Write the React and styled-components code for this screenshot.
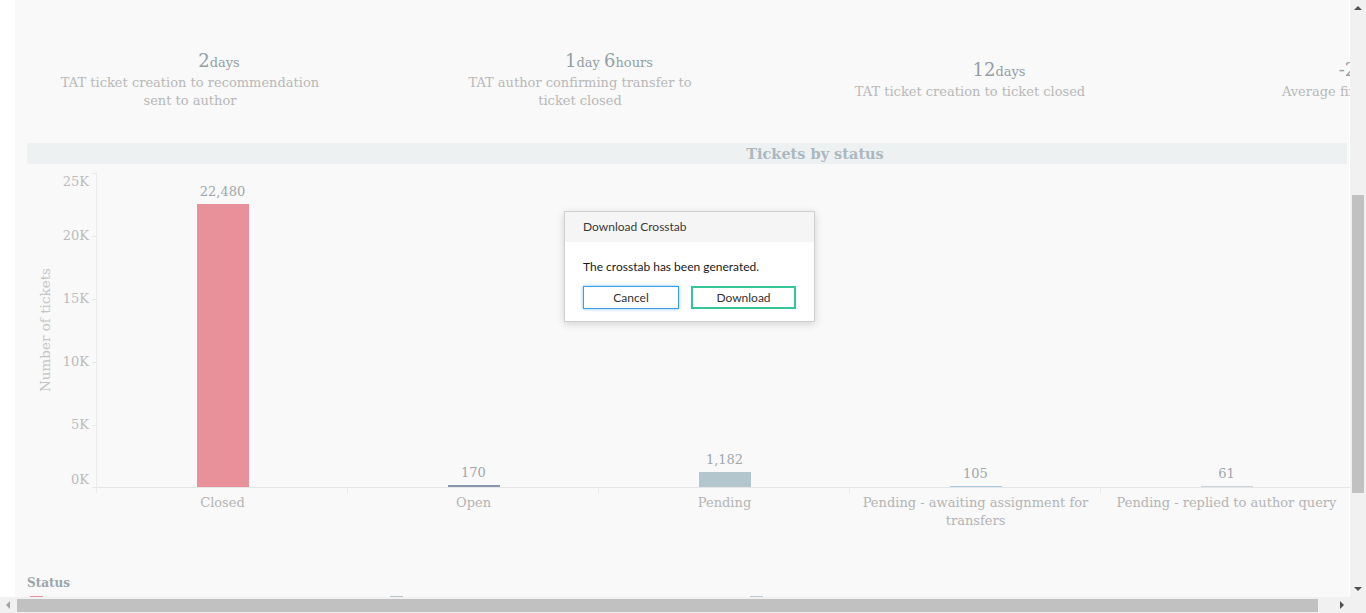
import React from 'react';
import styled, {createGlobalStyle} from 'styled-components';

const serif = `"DejaVu Serif", "Liberation Serif", serif`;
const sans = `Lato, "Open Sans", "Liberation Sans", sans-serif`;

const GlobalStyle = createGlobalStyle`
    html, body {
        margin: 0;
        padding: 0;
        overflow: hidden;
        background: #fff;
    }
`;

const kpis = [
    {value: [['2', 'days']], label: 'TAT ticket creation to recommendation sent to author'},
    {value: [['1', 'day '], ['6', 'hours']], label: 'TAT author confirming transfer to ticket closed'},
    {value: [['12', 'days']], label: 'TAT ticket creation to ticket closed'},
    {value: [['-2', 'days '], ['4', 'hours']], label: 'Average first reply time'},
];

const statuses = [
    {name: 'Closed', count: 22480, color: '#e8919b'},
    {name: 'Open', count: 170, color: '#8c96b0'},
    {name: 'Pending', count: 1182, color: '#b3c5cd'},
    {name: 'Pending - awaiting assignment for transfers', count: 105, color: '#a9c9dd'},
    {name: 'Pending - replied to author query', count: 61, color: '#c9d3d9'},
];

const legend = [
    {name: 'Closed', color: '#e8919b'},
    {name: 'Pending', color: '#b8c6ce'},
    {name: 'Pending - awaiting assignment for transfers', color: '#b9cbd6'},
];

const ticks = [0, 5000, 10000, 15000, 20000, 25000];
const MAX = 25000;
const PLOT_H = 316;
const SCALE_H = 315;

const Frame = styled.div`
    position: relative;
    width: 1366px;
    height: 613px;
    display: grid;
    grid-template-columns: 1fr 16px;
    grid-template-rows: 1fr 16px;
    font-family: ${serif};
`;

const Viewport = styled.div`
    overflow: hidden;
    background: #fff;
    padding-left: 15px;
`;

const Panel = styled.div`
    width: 1334px;
    height: 100%;
    background: #f9f9f9;
`;

/* KPI strip */
const KpiRow = styled.div`
    box-sizing: border-box;
    height: 143px;
    padding-top: 17px;
    display: grid;
    grid-template-columns: repeat(4, 390px);
    align-items: center;
`;

const Kpi = styled.div`
    display: flex;
    flex-direction: column;
    align-items: center;
    text-align: center;
`;

const KpiValue = styled.div`
    padding-left: 18px;
    line-height: 22px;
    font-size: 13px;
    color: #939fa5;
    white-space: nowrap;
`;

const Big = styled.span`
    font-size: 18px;
`;

const KpiLabel = styled.div`
    max-width: 262px;
    padding-right: 40px;
    font-size: 13px;
    line-height: 18px;
    color: #b8b8b8;
`;

/* chart */
const ChartTitle = styled.div`
    margin: 0 2px 0 12px;
    height: 21px;
    line-height: 21px;
    padding-left: 256px;
    background: #eef1f2;
    text-align: center;
    font-size: 14.5px;
    font-weight: bold;
    color: #abb8be;
`;

const ChartGrid = styled.div`
    display: grid;
    grid-template-columns: 35px 34px 1255px;
    grid-template-rows: ${PLOT_H}px auto;
    margin: 8px 0 0 12px;
`;

const AxisTitleCell = styled.div`
    display: flex;
    align-items: center;
    justify-content: center;
`;

const AxisTitle = styled.span`
    writing-mode: vertical-rl;
    transform: rotate(180deg);
    font-size: 13.5px;
    color: #c4c4c4;
    white-space: nowrap;
`;

const TickColumn = styled.div`
    position: relative;
`;

const TickLabel = styled.span`
    position: absolute;
    right: 7px;
    line-height: 16px;
    font-size: 13px;
    color: #bcbcbc;
`;

const TickMark = styled.span`
    position: absolute;
    right: 0;
    width: 4px;
    height: 1px;
    background: #e9e9e9;
`;

const Plot = styled.div`
    display: flex;
    border-left: 1px solid #ebebeb;
    border-bottom: 1px solid #e6e6e6;
`;

const BarColumn = styled.div`
    flex: none;
    width: 251px;
    display: flex;
    flex-direction: column;
    align-items: center;
    justify-content: flex-end;
`;

const ValueLabel = styled.span`
    font-size: 13px;
    line-height: 16px;
    color: #9da8ab;
    margin-bottom: 4px;
`;

const Bar = styled.div`
    width: 52px;
    background: ${p => p.$color};
`;

const CategoryRow = styled.div`
    grid-column: 3;
    display: flex;
    margin-left: 1px;
`;

const Category = styled.div`
    position: relative;
    flex: none;
    box-sizing: border-box;
    width: 251px;
    padding: 6px 6px 0;
    text-align: center;
    font-size: 13px;
    line-height: 18px;
    color: #b4b4b4;

    &::before {
        content: '';
        position: absolute;
        left: -1px;
        top: 0;
        width: 1px;
        height: 5px;
        background: #ebebeb;
    }
`;

/* legend */
const Legend = styled.div`
    margin: 45px 0 0 12px;
`;

const LegendTitle = styled.div`
    font-size: 12px;
    line-height: 16px;
    font-weight: bold;
    color: #9ba7ab;
`;

const LegendItems = styled.div`
    display: grid;
    grid-template-columns: repeat(3, 360px);
    margin-top: 5px;
`;

const LegendItem = styled.div`
    display: flex;
    align-items: flex-start;
    gap: 6px;
    padding-left: 3px;
    font-size: 12px;
    line-height: 14px;
    color: #b4b4b4;
`;

const LegendText = styled.span`
    padding-top: 4px;
`;

const Swatch = styled.span`
    flex: none;
    width: 13px;
    height: 10px;
    background: ${p => p.$color};
`;

/* scrollbars */
const VScroll = styled.div`
    grid-column: 2;
    grid-row: 1;
    display: flex;
    flex-direction: column;
    background: #f1f1f1;
`;

const HScroll = styled.div`
    grid-column: 1;
    grid-row: 2;
    display: flex;
    background: #f1f1f1;
`;

const Corner = styled.div`
    grid-column: 2;
    grid-row: 2;
    background: #f1f1f1;
`;

const ArrowBtn = styled.div`
    flex: none;
    width: 16px;
    height: 16px;
    display: flex;
    align-items: center;
    justify-content: center;
`;

const arrowBorders = {
    up: c => `border-width: 0 4px 4px; border-color: transparent transparent ${c};`,
    down: c => `border-width: 4px 4px 0; border-color: ${c} transparent transparent;`,
    left: c => `border-width: 4px 4px 4px 0; border-color: transparent ${c} transparent transparent;`,
    right: c => `border-width: 4px 0 4px 4px; border-color: transparent transparent transparent ${c};`,
};

const Arrow = styled.span`
    width: 0;
    height: 0;
    border-style: solid;
    ${p => arrowBorders[p.$dir](p.$disabled ? '#a3a3a3' : '#505050')}
`;

const Track = styled.div`
    flex: 1;
    display: flex;
    flex-direction: ${p => (p.$vertical ? 'column' : 'row')};
    align-items: center;
`;

const Thumb = styled.div`
    flex: none;
    background: #c1c1c1;
    ${p => p.$vertical
        ? `width: 12px; height: ${p.$size}px; margin-top: ${p.$offset}px;`
        : `height: 13px; width: ${p.$size}px; margin-left: ${p.$offset}px;`}
`;

/* dialog */
const Dialog = styled.div`
    position: absolute;
    left: 564px;
    top: 211px;
    width: 251px;
    box-sizing: border-box;
    background: #fff;
    border: 1px solid #cfcfcf;
    box-shadow: 0 2px 8px rgba(0, 0, 0, 0.16);
    font-family: ${sans};
`;

const DialogHeader = styled.div`
    height: 30px;
    line-height: 30px;
    padding: 0 18px;
    background: #f5f5f5;
    font-size: 12px;
    color: #3a3a3a;
`;

const DialogBody = styled.div`
    padding: 17px 18px 12px;
`;

const Message = styled.div`
    font-size: 12px;
    line-height: 16px;
    color: #1a1a1a;
    margin-bottom: 11px;
`;

const Buttons = styled.div`
    display: flex;
    gap: 12px;
`;

const DialogButton = styled.button`
    box-sizing: border-box;
    width: ${p => p.$width}px;
    height: 23px;
    padding: 0;
    background: #fff;
    font-family: ${sans};
    font-size: 12px;
    color: #333;
    border: ${p => (p.$primary ? '2px solid #33c796' : '1px solid #3f9ce8')};
    box-shadow: ${p => (p.$primary ? 'none' : '0 0 3px rgba(63, 156, 232, 0.7)')};
`;

const barHeight = v => Math.max(1, Math.round((v / MAX) * SCALE_H));
const tickY = v => PLOT_H - (v / MAX) * SCALE_H;

const App = () => {
    return (
        <Frame>
            <GlobalStyle/>
            <Viewport>
                <Panel>
                    <KpiRow>
                        {kpis.map(k => (
                            <Kpi key={k.label}>
                                <KpiValue>
                                    {k.value.map(([n, unit]) => (
                                        <React.Fragment key={n + unit}>
                                            <Big>{n}</Big>{unit}
                                        </React.Fragment>
                                    ))}
                                </KpiValue>
                                <KpiLabel>{k.label}</KpiLabel>
                            </Kpi>
                        ))}
                    </KpiRow>

                    <ChartTitle>Tickets by status</ChartTitle>
                    <ChartGrid>
                        <AxisTitleCell>
                            <AxisTitle>Number of tickets</AxisTitle>
                        </AxisTitleCell>
                        <TickColumn>
                            {ticks.map(t => {
                                const y = tickY(t);
                                const top = Math.min(Math.max(y - 8, 2), PLOT_H - 16);
                                return (
                                    <React.Fragment key={t}>
                                        <TickLabel style={{top}}>{t / 1000}K</TickLabel>
                                        <TickMark style={{top: Math.min(y, PLOT_H - 1)}}/>
                                    </React.Fragment>
                                );
                            })}
                        </TickColumn>
                        <Plot>
                            {statuses.map(s => (
                                <BarColumn key={s.name}>
                                    <ValueLabel>{s.count.toLocaleString('en-US')}</ValueLabel>
                                    <Bar $color={s.color} style={{height: barHeight(s.count)}}/>
                                </BarColumn>
                            ))}
                        </Plot>
                        <CategoryRow>
                            {statuses.map(s => (
                                <Category key={s.name}>{s.name}</Category>
                            ))}
                        </CategoryRow>
                    </ChartGrid>

                    <Legend>
                        <LegendTitle>Status</LegendTitle>
                        <LegendItems>
                            {legend.map(l => (
                                <LegendItem key={l.name}>
                                    <Swatch $color={l.color}/>
                                    <LegendText>{l.name}</LegendText>
                                </LegendItem>
                            ))}
                        </LegendItems>
                    </Legend>
                </Panel>
            </Viewport>

            <VScroll>
                <ArrowBtn><Arrow $dir="up"/></ArrowBtn>
                <Track $vertical>
                    <Thumb $vertical $offset={179} $size={298}/>
                </Track>
                <ArrowBtn><Arrow $dir="down"/></ArrowBtn>
            </VScroll>
            <HScroll>
                <ArrowBtn><Arrow $dir="left" $disabled/></ArrowBtn>
                <Track>
                    <Thumb $offset={1} $size={1301}/>
                </Track>
                <ArrowBtn><Arrow $dir="right"/></ArrowBtn>
            </HScroll>
            <Corner/>

            <Dialog>
                <DialogHeader>Download Crosstab</DialogHeader>
                <DialogBody>
                    <Message>The crosstab has been generated.</Message>
                    <Buttons>
                        <DialogButton $width={96}>Cancel</DialogButton>
                        <DialogButton $width={105} $primary>Download</DialogButton>
                    </Buttons>
                </DialogBody>
            </Dialog>
        </Frame>
    );
};

export default App;
